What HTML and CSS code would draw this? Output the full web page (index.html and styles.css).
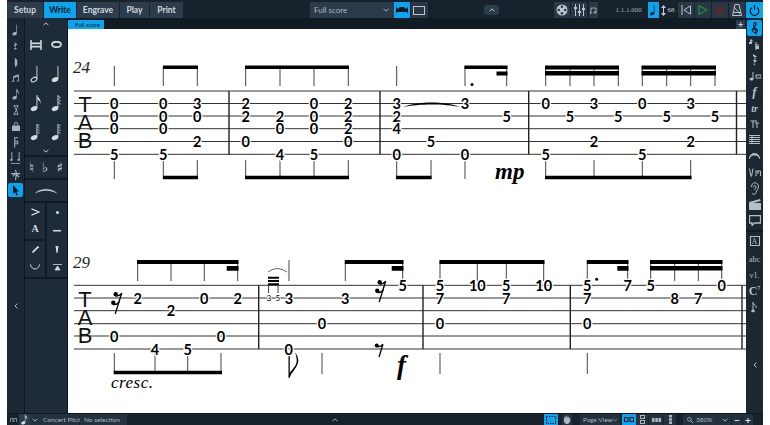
FILE: index.html
```html
<!DOCTYPE html>
<html>
<head>
    <meta charset="UTF-8">
    <title>Full score - Write</title>
    <link rel="stylesheet" href="styles.css">
</head>
<body>
    <!-- shared icons -->
    <svg class="icon-defs" width="0" height="0">
        <defs>
            <symbol id="n4" viewBox="0 0 14 18"><ellipse cx="5" cy="14.6" rx="3.4" ry="2.3" transform="rotate(-22 5 14.6)"/><rect x="7.5" y="1" width=".9" height="13"/></symbol>
            <symbol id="n2" viewBox="0 0 14 18"><ellipse cx="5" cy="14.6" rx="3" ry="2" fill="none" stroke="currentColor" stroke-width="1.1" transform="rotate(-30 5 14.6)"/><rect x="7.5" y="1" width=".9" height="13"/></symbol>
            <symbol id="n8" viewBox="0 0 14 18"><use href="#n4"/><path d="M8.4 1c.4 3 4.2 4 3 9 0-2.5-1.5-3.8-3-4.5z"/></symbol>
            <symbol id="n16" viewBox="0 0 14 18"><use href="#n4"/><path d="M8.4 1.5l2.4 2.5.2.8-2.6-2zM8.4 4.5l2.4 2.5.2.8-2.6-2zM8.4 7.5l2.4 2.5.2.8-2.6-2z"/></symbol>
            <symbol id="n32" viewBox="0 0 14 18"><use href="#n4"/><path d="M8.4 1l2.2 1.5v.7L8.4 1.7zM8.4 3.5l2.2 1.5v.7L8.4 4.2zM8.4 6l2.2 1.5v.7L8.4 6.7zM8.4 8.5l2.2 1.5v.7L8.4 9.2z"/></symbol>
            <symbol id="chev-up" viewBox="0 0 8 5"><path d="M.8 4L4 1l3.2 3" fill="none" stroke="currentColor" stroke-width="1.3"/></symbol>
            <symbol id="chev-down" viewBox="0 0 8 5"><path d="M.8 1L4 4l3.2-3" fill="none" stroke="currentColor" stroke-width="1.3"/></symbol>
        </defs>
    </svg>

    <div class="app">
        <header class="topbar">
            <nav class="mode-tabs">
                <a class="mode-tab">Setup</a>
                <a class="mode-tab active">Write</a>
                <a class="mode-tab">Engrave</a>
                <a class="mode-tab">Play</a>
                <a class="mode-tab">Print</a>
            </nav>
            <div class="layout-picker">
                <span class="layout-name">Full score</span>
                <svg class="chev"><use href="#chev-down"/></svg>
            </div>
            <button class="top-btn active w16"><svg width="12" height="9" viewBox="0 0 12 9"><path d="M0 7V1l2 2 2-2h4l2 2 2-2v6l-2-1H2z" fill="#0c1620"/></svg></button>
            <button class="top-btn w17 lite"><svg width="12" height="9" viewBox="0 0 12 9"><rect x=".5" y=".5" width="11" height="8" fill="none" stroke="currentColor"/></svg></button>
            <button class="chip"><svg class="chev"><use href="#chev-up"/></svg></button>

            <button class="top-btn w16 lite first"><svg width="12" height="12" viewBox="0 0 12 12"><circle cx="6" cy="6" r="5.5" fill="currentColor"/><g fill="#2b3a47"><circle cx="6" cy="2.8" r="1.3"/><circle cx="6" cy="9.2" r="1.3"/><circle cx="2.8" cy="6" r="1.3"/><circle cx="9.2" cy="6" r="1.3"/></g></svg></button>
            <button class="top-btn w16 lite"><svg width="11" height="12" viewBox="0 0 11 12"><path d="M1.5 0v12M5.5 0v12M9.5 0v12" stroke="currentColor"/><path d="M0 3h3v2H0zM4 7h3v2H4zM8 4h3v2H8z" fill="currentColor"/></svg></button>
            <button class="top-btn w10 lite"><svg width="7" height="7" viewBox="0 0 7 7"><path d="M1 1h5v4M1 1v5M6 5H4v1h2zM1 5.5H0v1h1z" fill="none" stroke="currentColor" stroke-width=".8"/></svg></button>

            <span class="time-code">1.1.1.000</span>
            <button class="top-btn active w11"><svg width="9" height="14"><use href="#n4" fill="#0c1620"/></svg></button>
            <div class="tempo">
                <svg width="5" height="11" viewBox="0 0 5 11"><path d="M2.5 0L5 3H3v5h2l-2.5 3L0 8h2V3H0z" fill="currentColor"/></svg>
                <span>68</span>
            </div>
            <button class="top-btn w16 lite"><svg width="10" height="10" viewBox="0 0 10 10"><path d="M1 0v10M9.5 .8v8.4L3 5z" fill="none" stroke="currentColor"/></svg></button>
            <button class="top-btn w16 lite play"><svg width="10" height="10" viewBox="0 0 10 10"><path d="M1 .8v8.4L9 5z" fill="none" stroke="currentColor" stroke-width="1.1"/></svg></button>
            <button class="top-btn w16 lite record"><svg width="10" height="10" viewBox="0 0 10 10"><circle cx="5" cy="5" r="4" fill="currentColor"/></svg></button>
            <button class="top-btn w16 lite"><svg width="10" height="12" viewBox="0 0 10 12"><path d="M3 .5h4l2.5 11H.5zM1.5 8.5h7M2 3l6 7" fill="none" stroke="currentColor"/></svg></button>
            <button class="top-btn active w17"><svg width="11" height="11" viewBox="0 0 11 11"><path d="M3 2.5a4.3 4.3 0 1 0 5 0M5.5 0v5" fill="none" stroke="#0c1620" stroke-width="1.2"/></svg></button>
        </header>

        <div class="workspace">
            <aside class="tool-strip">
                <button class="strip-btn"><svg width="10" height="12"><use href="#n4"/></svg></button>
                <button class="strip-btn"><svg width="5" height="10" viewBox="0 0 6 11"><path d="M1 0l4 3.5L2.5 6 5 9.5C3 8.5 2 9 3 11 1 9.5 1 8 3 7.5L1 4.5l2-1.5z" fill="currentColor"/></svg></button>
                <button class="strip-btn"><svg width="4" height="11" viewBox="0 0 5 12"><path d="M1 0l3 3v6l-2 3-1-3z" fill="currentColor"/></svg></button>
                <button class="strip-btn"><svg width="10" height="9" viewBox="0 0 12 11"><path d="M3 9V3l6-2v7M.8 9h3M6.8 8.5h3" fill="none" stroke="currentColor"/><path d="M3 3l6-2v2L3 5z" fill="currentColor"/></svg></button>
                <button class="strip-btn"><svg width="10" height="12"><use href="#n8"/></svg></button>
                <button class="strip-btn"><svg width="6" height="10" viewBox="0 0 7 11"><path d="M.5 .5h6M.5 10.5h6M1.5 .5c1 3 4 7 4 10M5.5 .5c0 3-3 7-4 10" fill="none" stroke="currentColor"/></svg></button>
                <button class="strip-btn"><svg width="8" height="9" viewBox="0 0 9 10"><path d="M2.5 4V2.5a2 2 0 0 1 4 0V4" fill="none" stroke="currentColor"/><rect y="4" width="9" height="6" rx="1" fill="currentColor"/></svg></button>
                <button class="strip-btn"><svg width="6" height="11" viewBox="0 0 7 12"><path d="M6 .5H2v4h3.5v3H2M2 4v8" fill="none" stroke="currentColor" stroke-width="1.2"/></svg></button>
                <button class="strip-btn"><svg width="11" height="12" viewBox="0 0 12 13"><path d="M2 0v8M10 0v8M1 12c2 1 8 1 10 0" fill="none" stroke="currentColor"/><circle cx="1.5" cy="8.5" r="1.3" fill="currentColor"/><circle cx="9.5" cy="8.5" r="1.3" fill="currentColor"/></svg></button>
                <button class="strip-btn"><svg width="11" height="11" viewBox="0 0 12 12"><path d="M1 5h10M6 1l1 4-1 7M3 8l3-3 4 4" fill="none" stroke="currentColor" stroke-width="1.2"/></svg></button>
                <button class="strip-btn selected"><svg width="8" height="11" viewBox="0 0 8 11"><path d="M1 0l6 6.5H4.3l1.5 3.5-1.3.6L3 7 1 9z" fill="#0c1620"/></svg></button>
                <button class="strip-btn collapse"><svg width="4" height="6" viewBox="0 0 4 6"><path d="M3.5.5L1 3l2.5 2.5" fill="none" stroke="currentColor"/></svg></button>
            </aside>

            <aside class="note-panel">
                <button class="panel-chev top"><svg class="chev"><use href="#chev-up"/></svg></button>
                <div class="duration-grid">
                    <button class="panel-btn"><svg width="12" height="10" viewBox="0 0 12 10"><path d="M1 0v10M11 0v10" stroke="currentColor" stroke-width="1.5"/><rect x="1" y="2.5" width="10" height="1.7" fill="currentColor"/><rect x="1" y="5.8" width="10" height="1.7" fill="currentColor"/></svg></button>
                    <button class="panel-btn"><svg width="11" height="7" viewBox="0 0 11 7"><ellipse cx="5.5" cy="3.5" rx="4.5" ry="2.7" fill="none" stroke="currentColor" stroke-width="1.7"/></svg></button>
                    <button class="panel-btn"><svg width="14" height="18"><use href="#n2"/></svg></button>
                    <button class="panel-btn"><svg width="14" height="18"><use href="#n4"/></svg></button>
                    <button class="panel-btn"><svg width="14" height="18"><use href="#n8"/></svg></button>
                    <button class="panel-btn"><svg width="14" height="18"><use href="#n16"/></svg></button>
                    <button class="panel-btn"><svg width="14" height="18"><use href="#n32"/></svg></button>
                    <button class="panel-btn"><svg width="14" height="18"><use href="#n32"/></svg></button>
                </div>
                <button class="panel-chev bottom"><svg class="chev"><use href="#chev-down"/></svg></button>
                <div class="accidentals">
                    <span>♮</span><span>♭</span><span>♯</span>
                </div>
                <div class="slur-row">
                    <svg width="22" height="7" viewBox="0 0 22 7"><path d="M.5 6C6 1 16 1 21.5 6 16 2.5 6 2.5 .5 6z" fill="currentColor" stroke="currentColor" stroke-width=".5"/></svg>
                </div>
                <div class="articulations">
                    <div class="artic-col">
                        <div class="artic-group">
                            <button class="panel-btn"><svg width="9" height="8" viewBox="0 0 9 8"><path d="M.5 .8L8 4 .5 7.2" fill="none" stroke="currentColor" stroke-width="1.3"/></svg></button>
                            <button class="panel-btn"><b class="marcato">A</b></button>
                        </div>
                        <div class="artic-group">
                            <button class="panel-btn"><svg width="7" height="7" viewBox="0 0 7 7"><path d="M.5 6.5L6.5 .5" stroke="currentColor" stroke-width="1.8"/></svg></button>
                            <button class="panel-btn"><svg width="10" height="6" viewBox="0 0 10 6"><path d="M.5 .5c1 6 8 6 9 0" fill="none" stroke="currentColor"/></svg></button>
                        </div>
                    </div>
                    <div class="artic-col right">
                        <button class="panel-btn"><svg width="3" height="3"><circle cx="1.5" cy="1.5" r="1.5" fill="currentColor"/></svg></button>
                        <button class="panel-btn"><svg width="8" height="2"><rect width="8" height="1.5" fill="currentColor"/></svg></button>
                        <button class="panel-btn"><svg width="4" height="7" viewBox="0 0 4 7"><path d="M.5 0h3L2.5 7h-1z" fill="currentColor"/></svg></button>
                        <button class="panel-btn"><svg width="9" height="7" viewBox="0 0 9 7"><path d="M0 .5h9M4.5 2l-2.500 4h5z" fill="currentColor" stroke="currentColor" stroke-width=".8"/></svg></button>
                    </div>
                </div>
            </aside>

            <main class="score-column">
                <div class="layout-tabs">
                    <span class="layout-tab">Full score</span>
                    <button class="add-tab">+</button>
                </div>

                <svg class="score" width="678" height="384" viewBox="68 29 678 384">
                    <defs>
                        <g id="rest16">
                            <path d="M5-10L-1.5 11" class="rest-stem"/>
                            <circle cx="-1" cy="-8.7" r="2.2"/><circle cx="-3.4" cy="-.3" r="2.2"/>
                            <path d="M-1-7Q2-6.5 5-9.5M-3.4 1.500Q0 2 2.7-1" class="rest-stem"/>
                        </g>
                    </defs>

                    <!-- system 1 -->
                    <text class="bar-number" x="73" y="73">24</text>
                    <path class="staff" d="M74 91H746M74 103.5H746M74 116H746M74 128.7H746M74 141.5H746M74 154.3H746"/>
                    <path class="barline" d="M229 91V154.3M380 91V154.3M528.7 91V154.3M736.5 91V154.3"/>
                    <g class="clef">
                        <text x="85" y="112">T</text><text x="85" y="129.5">A</text><text x="85" y="147.5">B</text>
                    </g>
                    <path class="stem" d="M114.3 66V86M163.3 66V86M197.3 66V86M245.7 66V86M280 66V86M314 66V86M348.3 66V86M396.7 66V86M465 66V86M506.7 66V86M545.7 66V86M570 66V86M594 66V86M618.3 66V86M642.3 66V86M666.7 66V86M690.7 66V86M715 66V86"/>
                    <path class="stem" d="M114.3 160V179M163.3 160V179M197.3 160V179M245.7 160V179M280 160V179M314 160V179M348.3 160V179M396.7 160V179M431 160V179M465 160V179M545.7 160V179M594 160V179M642.3 160V179M690.7 160V179"/>
                    <path class="beam" d="M163 65.5H198V69H163zM245 65.5H349V69H245zM464.5 65.5H507.5V69H464.5zM496.5 71.5H507.5V75.5H496.5zM545 65.5H619V69.5H545zM545 71H619V75.5H545zM641.5 65.5H716V69.5H641.5zM641.5 71H716V75.5H641.5z"/>
                    <path class="beam" d="M163 175.7H198V179.3H163zM245 175.7H349V179.3H245zM396 175.7H431.5V179.3H396zM545 175.7H691.5V179.3H545z"/>
                    <circle cx="472" cy="84.6" r="1.5"/>
                    <path d="M403 107C418 101 445 101 460 107 445 103.5 418 103.5 403 107z"/>
                    <text class="dynamic" x="495" y="179">mp</text>
                    <g class="fret">
                        <text x="114.3" y="103.5">0</text><text x="114.3" y="116">0</text><text x="114.3" y="128.7">0</text><text x="114.3" y="154.3">5</text>
                        <text x="163.3" y="103.5">0</text><text x="163.3" y="116">0</text><text x="163.3" y="128.7">0</text><text x="163.3" y="154.3">5</text>
                        <text x="197.3" y="103.5">3</text><text x="197.3" y="116">0</text><text x="197.3" y="141.5">2</text>
                        <text x="245.7" y="103.5">2</text><text x="245.7" y="116">2</text><text x="245.7" y="141.5">0</text>
                        <text x="280" y="116">2</text><text x="280" y="128.7">0</text><text x="280" y="154.3">4</text>
                        <text x="314" y="103.5">0</text><text x="314" y="116">0</text><text x="314" y="128.7">0</text><text x="314" y="154.3">5</text>
                        <text x="348.3" y="103.5">2</text><text x="348.3" y="116">2</text><text x="348.3" y="128.7">2</text><text x="348.3" y="141.5">0</text>
                        <text x="396.7" y="103.5">3</text><text x="396.7" y="116">2</text><text x="396.7" y="128.7">4</text><text x="396.7" y="154.3">0</text>
                        <text x="431" y="141.5">5</text>
                        <text x="465" y="103.5">3</text><text x="465" y="154.3">0</text>
                        <text x="506.7" y="116">5</text>
                        <text x="545.7" y="103.5">0</text><text x="545.7" y="154.3">5</text>
                        <text x="570" y="116">5</text>
                        <text x="594" y="103.5">3</text><text x="594" y="141.5">2</text>
                        <text x="618.3" y="116">5</text>
                        <text x="642.3" y="103.5">0</text><text x="642.3" y="154.3">5</text>
                        <text x="666.7" y="116">5</text>
                        <text x="690.7" y="103.5">3</text><text x="690.7" y="141.5">2</text>
                        <text x="715" y="116">5</text>
                    </g>

                    <!-- system 2 -->
                    <text class="bar-number" x="73" y="267.7">29</text>
                    <path class="staff" d="M74 285.3H746M74 298H746M74 310.7H746M74 323.7H746M74 336H746M74 349H746"/>
                    <path class="barline" d="M258.7 285.3V349M423 285.3V349M570.3 285.3V349M742 285.3V349"/>
                    <g class="clef">
                        <text x="85" y="307">T</text><text x="85" y="325">A</text><text x="85" y="343">B</text>
                    </g>
                    <path class="stem" d="M137.7 261V281M171 261V281M204.3 261V281M237.7 261V281M289 260V281M345.3 261V281M402.7 261V281M440 261V281M477.3 261V281M506.3 261V281M543.7 261V281M587.3 261V281M627.7 261V281M650.7 261V281M674.7 261V281M698.3 261V281M721.7 261V281"/>
                    <path class="stem" d="M114.3 353V374M155 353V374M187.7 353V374M221 353V374M322 353V374M440 353V374M587.3 353V374M268.5 285V293M278 285V293"/>
                    <path class="beam" d="M137 260H238.5V264H137zM226.7 266H238.5V270.7H226.7zM344.8 260H403.5V264H344.8zM391.7 266H403.5V270.7H391.7zM439.5 260H544.5V264H439.5zM586.8 260H628.5V264H586.8zM617.3 266H628.5V270.7H617.3zM650 260H722.5V264H650zM650 266H722.5V270.5H650z"/>
                    <path class="beam" d="M113.8 370.7H222V374.3H113.8z"/>
                    <path class="beam" d="M268 276.7H279V278.7H268zM268 280H279V282H268zM268 283.3H279V285.3H268z"/>
                    <path class="tie" d="M268 272Q277 265 287 272"/>
                    <use href="#rest16" x="116.7" y="303"/>
                    <use href="#rest16" x="380.7" y="291"/>
                    <path class="rest-stem" d="M383 344.3L379 357M376.7 346.5Q380 347.5 383 344.3"/>
                    <circle cx="376.7" cy="345.5" r="2"/>
                    <path d="M288.5 353H289.8V373C292 369 297 366 296.7 360 296.5 357 296 355 295 352.5 297 354.5 298.5 358 298.3 361 298 367 292 371 289.5 378H288.5z"/>
                    <circle cx="596.7" cy="279.3" r="1.5"/>
                    <text class="expression" x="111" y="388">cresc.</text>
                    <text class="dynamic f" x="397" y="374">f</text>
                    <g class="fret">
                        <text x="137.7" y="298">2</text><text x="171" y="310.7">2</text><text x="204.3" y="298">0</text><text x="237.7" y="298">2</text>
                        <text x="114.3" y="336">0</text><text x="155" y="349">4</text><text x="187.7" y="349">5</text><text x="221" y="336">0</text>
                        <text x="289" y="298">3</text><text x="288.7" y="349">0</text><text x="322" y="323.7">0</text><text x="345.3" y="298">3</text>
                        <text x="402.7" y="285.3">5</text>
                        <text x="440" y="285.3">5</text><text x="440" y="298">7</text><text x="440" y="323.7">0</text>
                        <text x="477.3" y="285.3">10</text>
                        <text x="506.3" y="285.3">5</text><text x="506.3" y="298">7</text>
                        <text x="543.7" y="285.3">10</text>
                        <text x="587.3" y="285.3">5</text><text x="587.3" y="298">7</text><text x="587.3" y="323.7">0</text>
                        <text x="627.7" y="285.3">7</text>
                        <text x="650.7" y="285.3">5</text>
                        <text x="674.7" y="298">8</text><text x="698.3" y="298">7</text>
                        <text x="721.7" y="285.3">0</text>
                    </g>
                    <g class="fret grace">
                        <text x="268.7" y="298">3</text><text x="277.7" y="298">5</text>
                    </g>
                </svg>
            </main>

            <aside class="side-strip">
                <button class="side-btn selected"><svg width="8" height="13" viewBox="0 0 8 13"><path d="M4.5 12c1.5 0 1-2-1-6.5S3.5 .5 4.500 .5 6 2.5 3.5 5 .5 7.500 2 9.5s4.500 1 4.500-1-3-2.500-4-.5" fill="none" stroke="#0c1620" stroke-width="1.1"/></svg></button>
                <button class="side-btn"><svg width="11" height="11" viewBox="0 0 11 11"><path d="M2 0v4M1 1.5h2.5M1 3h2.5M7 3v8M6 6h4M6 8h4" fill="none" stroke="currentColor"/><rect x="0" y="3" width="3" height="2" fill="currentColor"/><rect x="7" y="7" width="3" height="3" fill="currentColor"/></svg></button>
                <button class="side-btn"><svg width="6" height="12" viewBox="0 0 6 12"><path d="M1 0l4 2.5-3 2L5 7 2 9l2 3-3-2 2-1-2-2.5 3-2L1 2z" fill="currentColor"/></svg></button>
                <button class="side-btn"><svg width="12" height="10" viewBox="0 0 12 10"><path d="M4 1v7M7 4h5v3H7z" fill="none" stroke="currentColor"/><ellipse cx="2.5" cy="8" rx="2" ry="1.5" fill="currentColor"/></svg></button>
                <button class="side-btn"><b class="dyn-icon">f</b></button>
                <button class="side-btn"><b class="dyn-icon small">tr</b></button>
                <button class="side-btn"><svg width="10" height="9" viewBox="0 0 10 9"><path d="M.5 1H7M3 1v7M5 3h4M7 3v5" fill="none" stroke="currentColor"/></svg></button>
                <button class="side-btn"><svg width="11" height="10" viewBox="0 0 11 10"><path d="M0 .5h11M0 2.5h11M0 4.5h11M0 6.5h11M0 8.5h11M3 0v9" stroke="currentColor" fill="none"/></svg></button>
                <button class="side-btn"><svg width="11" height="6" viewBox="0 0 11 6"><path d="M.5 5.5a5 5 0 0 1 10 0 5 3.5 0 0 0-10 0z" fill="currentColor" stroke="currentColor"/></svg></button>
                <button class="side-btn"><svg width="12" height="9" viewBox="0 0 12 9"><path d="M.5 .5L2 8.5M4 .5L2.5 8.5M6.5 3h5v5M7 3v5M9 3v3" fill="none" stroke="currentColor"/></svg></button>
                <button class="side-btn"><svg width="9" height="13" viewBox="0 0 9 13"><path d="M1.5 5a3.5 4 0 1 1 6 2.5C6 9 6.5 12 4 12.5 3 12.5 2.5 12 2.5 11M3.500 5.500C3.500 3 6 3 6 5S4 7.500 5 8" fill="none" stroke="currentColor"/></svg></button>
                <button class="side-btn"><svg width="12" height="11" viewBox="0 0 12 11"><path d="M0 4h12v7H0z" fill="currentColor"/><path d="M0 3L11 0l.8 2L.8 5z" fill="currentColor"/></svg></button>
                <button class="side-btn"><svg width="12" height="11" viewBox="0 0 12 11"><path d="M.5 .5h11V8H5.5L3 10.5V8H.5z" fill="none" stroke="currentColor" stroke-width="1.3"/></svg></button>
                <div class="side-divider"></div>
                <button class="side-btn"><span class="text-box">A</span></button>
                <button class="side-btn tall"><span class="side-text">abc</span></button>
                <button class="side-btn"><span class="side-text">v1.</span></button>
                <button class="side-btn"><span class="side-text chord">C<sup>7</sup></span></button>
                <button class="side-btn"><svg width="7" height="11" viewBox="0 0 7 11"><path d="M2 0v9M2 1c1 2 4 2.5 3 5" fill="none" stroke="currentColor"/><ellipse cx="2" cy="9" rx="1.8" ry="1.3" fill="currentColor"/></svg></button>
                <button class="side-btn collapse"><svg width="4" height="6" viewBox="0 0 4 6"><path d="M3.5.5L1 3l2.5 2.5" fill="none" stroke="currentColor"/></svg></button>
            </aside>
        </div>

        <footer class="statusbar">
            <span class="grid-mark"><svg width="7" height="4" viewBox="0 0 7 4"><path d="M.5 4V.5H3V4M4 4V.5h2.500V4" fill="none" stroke="currentColor" stroke-width=".7"/></svg></span>
            <button class="status-note"><svg width="9" height="11"><use href="#n8"/></svg></button>
            <button class="status-chev"><svg class="chev"><use href="#chev-down"/></svg></button>
            <span class="status-label first">Concert Pitch</span>
            <span class="status-label second">No selection</span>
            <button class="status-up"><svg class="chev"><use href="#chev-up"/></svg></button>
            <button class="view-btn active"><svg width="10" height="8" viewBox="0 0 10 8"><rect x=".5" y=".5" width="9" height="7" fill="none" stroke="#0c1620" stroke-dasharray="1.5 1"/></svg></button>
            <button class="view-btn hand"><svg width="8" height="9" viewBox="0 0 8 9"><path d="M1 4l1-3 1 2 .5-3L5 3l1-2 .5 3 1-1L7 7 5 9H3L1 7z" fill="currentColor"/></svg></button>
            <span class="page-view">Page View<svg class="chev"><use href="#chev-down"/></svg></span>
            <button class="view-btn active pages"><svg width="10" height="5" viewBox="0 0 10 5"><rect x=".5" y=".5" width="3.5" height="4" fill="none" stroke="#0c1620"/><rect x="6" y=".5" width="3.5" height="4" fill="none" stroke="#0c1620"/></svg></button>
            <button class="view-btn tiny"><svg width="5" height="9" viewBox="0 0 5 9"><rect x=".5" y=".5" width="4" height="3" fill="none" stroke="currentColor"/><rect x=".5" y="5.5" width="4" height="3" fill="none" stroke="currentColor"/></svg></button>
            <button class="view-btn tiny wide"><svg width="9" height="4" viewBox="0 0 9 4"><path d="M0 0h2.500v4H0zM3.300 0h2.500v4H3.300zM6.500 0H9v4H6.500z" fill="currentColor"/></svg></button>
            <button class="view-btn tiny"><svg width="3" height="9" viewBox="0 0 3 9"><path d="M0 0h3v2.500H0zM0 3.300h3v2.500H0zM0 6.500h3V9H0z" fill="currentColor"/></svg></button>
            <div class="zoom-box">
                <svg width="6" height="6" viewBox="0 0 6 6"><circle cx="2.3" cy="2.3" r="1.8" fill="none" stroke="currentColor" stroke-width=".8"/><path d="M3.500 3.500L6 6" stroke="currentColor"/></svg>
                <span class="zoom-value">380%</span>
                <svg class="chev"><use href="#chev-down"/></svg>
            </div>
            <button class="zoom-step">−</button>
            <button class="zoom-step">+</button>
        </footer>
    </div>
</body>
</html>
```

FILE: styles.css
```css
/* Score editor window */
body {
    margin: 0;
    padding: 0 7px;
    background: #fff;
    font-family: Lato, Arial, sans-serif;
    overflow: hidden;
}

button {
    display: flex;
    align-items: center;
    justify-content: center;
    padding: 0;
    border: none;
    background: none;
    color: inherit;
    font-family: inherit;
}

svg {
    display: block;
    fill: currentColor;
}

.icon-defs {
    position: absolute;
}

.app {
    display: flex;
    flex-direction: column;
    height: 425px;
    color: #c3ced6;
    background: #0e171f;
}

.chev {
    width: 6px;
    height: 4px;
}

/* top bar */
.topbar {
    display: flex;
    align-items: stretch;
    height: 16px;
    padding-top: 2px;
    background: #17222c;
    flex: none;
}

.mode-tabs {
    display: flex;
    gap: 1px;
    width: 176px;
}

.mode-tab {
    display: flex;
    align-items: center;
    justify-content: center;
    width: 36px;
    background: #2d3c4a;
    font-size: 8.5px;
    font-weight: 700;
    color: #cfd8de;
}

.mode-tab:nth-child(2) {
    width: 32px;
}

.mode-tab:nth-child(3) {
    width: 42px;
}

.mode-tab:nth-child(4) {
    width: 29px;
}

.mode-tab:nth-child(5) {
    width: 33px;
}

.mode-tab.active {
    background: #0aa5ee;
    color: #0c1620;
}

.layout-picker {
    display: flex;
    align-items: center;
    justify-content: space-between;
    width: 86px;
    margin-left: 127px;
    padding: 0 5px 0 4px;
    box-sizing: border-box;
    background: #2c3b49;
    font-size: 8px;
    color: #aab6c0;
}

.top-btn {
    flex: none;
    background: #24323f;
    color: #b9c5ce;
}

.top-btn.lite {
    background: #2a3845;
}

.top-btn.active {
    background: #0aa5ee;
}

.w10 {
    width: 9px;
    margin-left: 1px;
}

.w11 {
    width: 11px;
}

.w16 {
    width: 16px;
    margin-right: 1px;
}

.w17 {
    width: 17px;
}

.chip {
    width: 16px;
    height: 10px;
    margin: 3px 55px 0 56px;
    border-radius: 3px;
    background: #2d3c4a;
}

.time-code {
    display: flex;
    align-items: center;
    width: 33px;
    margin-left: 17px;
    font-family: "Liberation Serif", serif;
    font-size: 7px;
    color: #a7b3bd;
}

.tempo {
    display: flex;
    align-items: center;
    gap: 2px;
    width: 20px;
    padding-left: 2px;
    box-sizing: border-box;
    font-family: "Liberation Serif", serif;
    font-size: 7px;
}

.play {
    color: #1c9a49;
}

.record {
    color: #5a2a33;
}

/* middle row */
.workspace {
    display: flex;
    flex: 1;
    min-height: 0;
}

.tool-strip {
    display: flex;
    flex-direction: column;
    align-items: center;
    width: 17px;
    padding-top: 4px;
    box-sizing: border-box;
    margin-right: 1px;
    background: #1b2834;
    color: #a9b5be;
}

.strip-btn {
    width: 15px;
    height: 16px;
    flex: none;
}

.strip-btn.selected {
    height: 14px;
    margin-top: 1px;
    border-radius: 2px;
    background: #0aa5ee;
}

.collapse {
    margin-top: 101px;
}

.note-panel {
    width: 42px;
    margin-right: 1px;
    background: #1e2b38;
}

.panel-chev {
    width: 100%;
    height: 12px;
}

.panel-chev.bottom {
    height: 9px;
}

.duration-grid {
    display: grid;
    grid-template-columns: 1fr 1fr;
    grid-auto-rows: 29px;
}

.panel-btn {
    height: 100%;
    width: 100%;
    color: #d3dbe1;
}

.accidentals {
    display: flex;
    justify-content: space-around;
    align-items: center;
    height: 23px;
    border-top: 2px solid #101a22;
    box-sizing: border-box;
    font-family: "DejaVu Sans", sans-serif;
    font-size: 13px;
    color: #e0e6ea;
}

.slur-row {
    display: flex;
    align-items: center;
    justify-content: center;
    height: 23px;
    border-top: 2px solid #101a22;
    box-sizing: border-box;
}

.articulations {
    display: grid;
    grid-template-columns: 1fr 1fr;
    gap: 2px;
    height: 74px;
    border-top: 2px solid #101a22;
    border-bottom: 2px solid #101a22;
    background: #101a22;
}

.artic-col {
    display: flex;
    flex-direction: column;
    gap: 2px;
}

.artic-group {
    display: grid;
    grid-auto-rows: 17px;
    background: #1e2b38;
    flex: 1;
}

.artic-col.right {
    display: grid;
    grid-auto-rows: 1fr;
    gap: 0;
    background: #1e2b38;
}

.marcato {
    font-family: "Liberation Serif", serif;
    font-size: 10px;
}

.score-column {
    display: flex;
    flex-direction: column;
    width: 678px;
}

.layout-tabs {
    display: flex;
    align-items: flex-end;
    justify-content: space-between;
    height: 11px;
    flex: none;
    background: #111b24;
}

.layout-tab {
    display: flex;
    align-items: center;
    height: 9px;
    width: 36px;
    padding-left: 7px;
    box-sizing: border-box;
    background: #0aa5ee;
    color: #0c1620;
    font-size: 6px;
}

.add-tab {
    width: 9px;
    height: 9px;
    margin-right: 1px;
    background: #2d3c4a;
    font-size: 9px;
    font-weight: 700;
}

.score {
    background: #fff;
    flex: none;
    fill: #000;
}

.side-strip {
    display: flex;
    flex-direction: column;
    align-items: center;
    width: 17px;
    padding-top: 2px;
    box-sizing: border-box;
    background: #1b2834;
    height: 395px;
    color: #b3bec7;
}

.side-btn {
    width: 15px;
    height: 16px;
    flex: none;
}

.side-btn.selected {
    border-radius: 2px;
    background: #0aa5ee;
}

.side-btn.tall {
    margin-top: 2px;
}

.side-divider {
    width: 17px;
    height: 2px;
    margin: 2px 0 1px;
    flex: none;
    background: #101a22;
}

.side-btn.collapse {
    margin-top: 42px;
}

.dyn-icon {
    font-family: "Liberation Serif", serif;
    font-style: italic;
    font-size: 13px;
}

.dyn-icon.small {
    font-size: 10px;
}

.text-box {
    display: flex;
    align-items: center;
    justify-content: center;
    width: 10px;
    height: 10px;
    border: 1px solid #b3bec7;
    box-sizing: border-box;
    font-family: "Liberation Serif", serif;
    font-size: 8px;
}

.side-text {
    font-family: "Liberation Serif", serif;
    font-size: 8px;
}

.side-text.chord {
    font-size: 12px;
    font-weight: 700;
}

.side-text sup {
    font-size: 6px;
    line-height: 0;
}

/* bottom bar */
.statusbar {
    display: flex;
    align-items: stretch;
    height: 11px;
    flex: none;
    margin-top: 1px;
    background: #17222c;
    font-size: 6.5px;
    color: #aab6c0;
    white-space: nowrap;
}

.grid-mark {
    display: flex;
    align-items: center;
    width: 12px;
    padding-left: 3px;
    box-sizing: border-box;
}

.status-note {
    width: 11px;
    background: #2d3c4a;
    color: #e0e6ea;
}

.status-chev {
    width: 10px;
    background: #24323f;
}

.status-label {
    display: flex;
    align-items: center;
    background: #24323f;
}

.status-label.first {
    width: 40px;
    padding-left: 3px;
    box-sizing: border-box;
    border-right: 1px solid #17222c;
}

.status-label.second {
    width: 47px;
    padding-left: 4px;
    box-sizing: border-box;
}

.status-up {
    width: 8px;
    margin: 0 205px 0 204px;
}

.view-btn {
    width: 14px;
    flex: none;
}

.view-btn.active {
    background: #0aa5ee;
}

.view-btn.hand {
    margin: 0 8px 0 4px;
    width: 10px;
    background: #24323f;
}

.page-view {
    display: flex;
    align-items: center;
    justify-content: space-between;
    width: 40px;
    margin-right: 2px;
    padding: 0 3px;
    box-sizing: border-box;
    background: #24323f;
}

.view-btn.tiny {
    width: 12px;
    background: #24323f;
    margin-right: 1px;
}

.view-btn.wide {
    width: 14px;
}

.zoom-box {
    display: flex;
    align-items: center;
    width: 48px;
    margin-left: 6px;
    padding: 0 3px 0 4px;
    box-sizing: border-box;
    background: #24323f;
}

.zoom-value {
    flex: 1;
    margin-left: 3px;
}

.zoom-step {
    width: 10px;
    margin-left: 1px;
    background: #24323f;
    font-size: 10px;
    font-weight: 700;
    color: #e0e6ea;
}

/* notation */
.staff {
    stroke: #333;
    stroke-width: 1;
    fill: none;
}

.barline {
    stroke: #222;
    stroke-width: 1.4;
    fill: none;
}

.stem {
    stroke: #444;
    stroke-width: 1;
    fill: none;
}

.tie {
    stroke: #222;
    stroke-width: .7;
    fill: none;
}

.rest-stem {
    stroke: #000;
    stroke-width: 1.3;
    fill: none;
}

.bar-number {
    font-family: "Liberation Serif", serif;
    font-style: italic;
    font-size: 17px;
    fill: #222;
}

.clef text {
    font-family: "Liberation Sans", Arial, sans-serif;
    font-size: 22px;
    text-anchor: middle;
    fill: #111;
}

.fret text {
    font-family: Lato, sans-serif;
    font-size: 14.5px;
    font-weight: 700;
    text-anchor: middle;
    dominant-baseline: central;
    paint-order: stroke;
    stroke: #fff;
    stroke-width: 2.5px;
    fill: #000;
}

.fret.grace text {
    font-size: 8px;
    font-weight: 400;
    stroke-width: 1.5px;
}

.dynamic {
    font-family: "Liberation Serif", serif;
    font-style: italic;
    font-weight: 700;
    font-size: 23px;
}

.dynamic.f {
    font-size: 27px;
}

.expression {
    font-family: "Liberation Serif", serif;
    font-style: italic;
    font-size: 17px;
    letter-spacing: .5px;
}
```
